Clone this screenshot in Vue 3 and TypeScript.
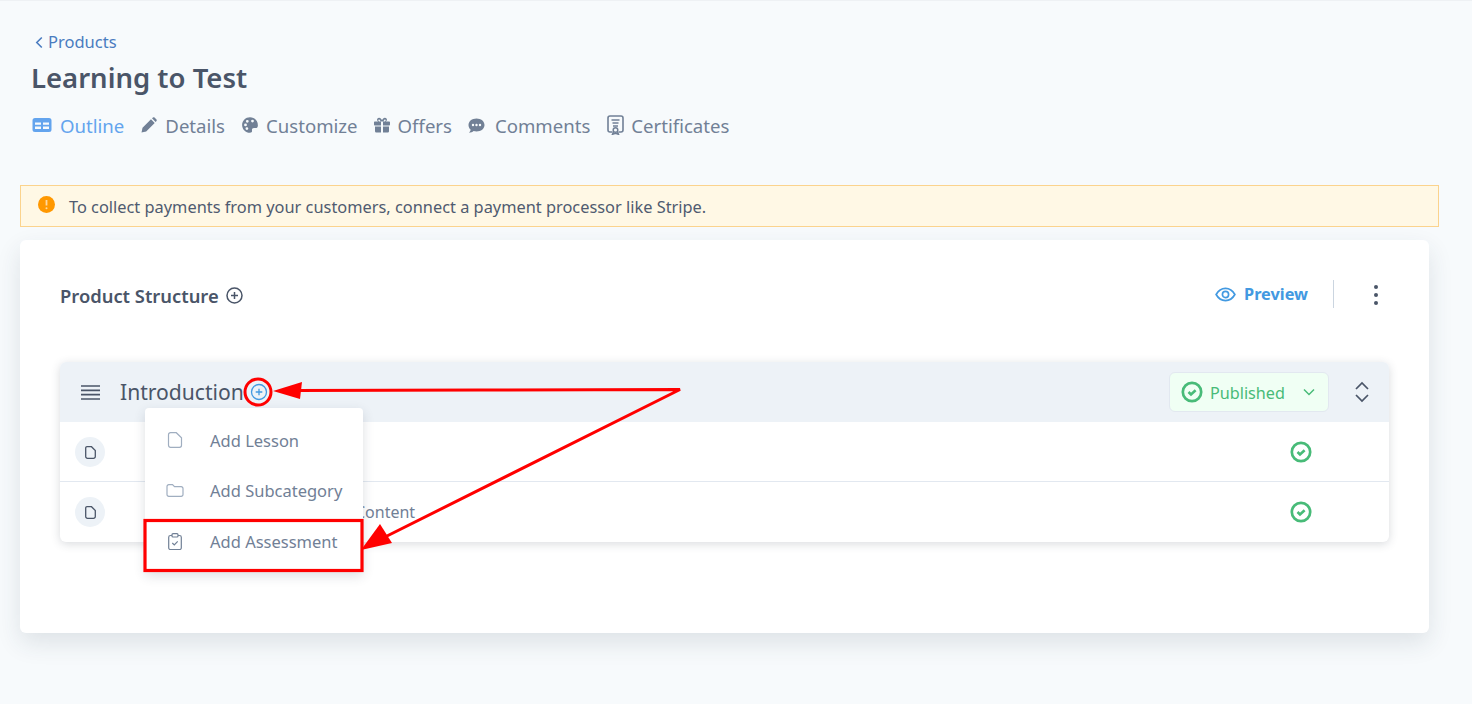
<script setup lang="ts">
const tabs = [
  { label: 'Outline', icon: 'outline', active: true },
  { label: 'Details', icon: 'details' },
  { label: 'Customize', icon: 'palette' },
  { label: 'Offers', icon: 'gift' },
  { label: 'Comments', icon: 'comment' },
  { label: 'Certificates', icon: 'cert' },
]
const rows = ['', 'Content']
</script>

<template>
  <div class="page">
    <header class="head">
      <a class="crumb">
        <svg width="8" height="13" viewBox="0 0 8 13"><path d="M6.800 1.500 1.800 6.500l5 5" fill="none" stroke="currentColor" stroke-width="1.600" /></svg>
        Products
      </a>
      <h1>Learning to Test</h1>
      <nav class="tabs">
        <a v-for="t in tabs" :key="t.label" class="tab" :class="[t.icon, { active: t.active }]">
          <svg v-if="t.icon === 'outline'" class="tab-ic" width="20" height="16" viewBox="0 0 20 16"><path fill="currentColor" fill-rule="evenodd" d="M3 1h14a2.500 2.500 0 0 1 2.500 2.500v9A2.500 2.500 0 0 1 17 15H3a2.500 2.500 0 0 1-2.500-2.500v-9A2.500 2.500 0 0 1 3 1Zm0 4.500v2.300h6V5.500Zm8 0v2.300h6V5.500Zm-8 4V12h6V9.500Zm8 0V12h6V9.500Z" /></svg>
          <svg v-else-if="t.icon === 'details'" class="tab-ic" width="16" height="16" viewBox="0 0 16 16"><path fill="currentColor" d="M.5 15.500l1-4.700 8.500-8.500 3.700 3.700-8.500 8.500ZM11 1.300 12 .5c.5-.4 1-.4 1.500 0l2 2c.4.500.4 1 0 1.500l-.9 1Z" /></svg>
          <svg v-else-if="t.icon === 'palette'" class="tab-ic" width="16" height="16" viewBox="0 0 16 16"><path fill="currentColor" fill-rule="evenodd" d="M8 .2C3.600.2.100 3.600.100 8S3.600 15.800 8 15.800c1.500 0 2.300-1 2-2.200-.3-1.300.4-2.500 1.900-2.500h1.700c1.400 0 2.300-1.100 2.300-2.700C15.900 3.500 12.400.2 8 .2ZM3.500 9.300a1.400 1.400 0 1 1 0-2.800 1.400 1.400 0 0 1 0 2.800Zm1.800-3.600a1.400 1.400 0 1 1 0-2.800 1.400 1.400 0 0 1 0 2.800Zm5.200-.2a1.400 1.400 0 1 1 0-2.800 1.400 1.400 0 0 1 0 2.800ZM4.900 13a1.400 1.400 0 1 1 0-2.800 1.400 1.400 0 0 1 0 2.800Z" /></svg>
          <svg v-else-if="t.icon === 'gift'" class="tab-ic" width="16" height="16" viewBox="0 0 16 16"><path fill="currentColor" d="M1 9.500h6v6H2.300A1.300 1.300 0 0 1 1 14.200Zm8 0h6v4.700a1.300 1.300 0 0 1-1.300 1.300H9ZM1 4.500h3.200C3 3.800 2.800 2.800 3.300 1.800 4 .5 5.800.4 6.800 1.400L8 3l1.200-1.600c1-1 2.800-.9 3.500.4.500 1 .3 2-.9 2.700H15c.6 0 1 .4 1 1v2c0 .5-.4 1-1 1H9v-4H7v4H1c-.6 0-1-.5-1-1v-2c0-.6.400-1 1-1Zm4.700 0h1.100L5.600 2.800c-.5-.6-1.300-.3-1.300.4 0 .8.700 1.300 1.400 1.300Zm3.500 0h1.100c.7 0 1.400-.5 1.400-1.300 0-.7-.8-1-1.300-.4Z" /></svg>
          <svg v-else-if="t.icon === 'comment'" class="tab-ic" width="17" height="15" viewBox="0 0 17 15"><path fill="currentColor" fill-rule="evenodd" d="M8.500.5c4.500 0 8 2.800 8 6.500s-3.500 6.500-8 6.500c-1 0-2-.2-2.900-.4C4.500 14 3 14.800.8 14.800c1-.9 1.700-2 1.900-3.100C1.200 10.500.5 8.900.5 7 .5 3.300 4 .5 8.500.5ZM5 5.800a1.200 1.200 0 1 0 0 2.400 1.200 1.200 0 0 0 0-2.400Zm3.500 0a1.200 1.200 0 1 0 0 2.400 1.200 1.200 0 0 0 0-2.400Zm3.500 0a1.200 1.200 0 1 0 0 2.400 1.200 1.200 0 0 0 0-2.400Z" /></svg>
          <svg v-else class="tab-ic" width="17" height="20" viewBox="0 0 17 20"><g fill="none" stroke="currentColor"><path stroke-width="1.600" d="M5.500 17H3a2 2 0 0 1-2-2V3a2 2 0 0 1 2-2h11a2 2 0 0 1 2 2v12a2 2 0 0 1-2 2h-2.500" /><path stroke-width="1.500" d="M4.500 5h8M5.500 8h6M6 11h5" /><circle cx="8.500" cy="15" r="2.300" stroke-width="1.500" /><path stroke-width="1.500" d="m6.500 17-1 2.300 3-1 3 1-1-2.300" /></g></svg>
          <span>{{ t.label }}</span>
        </a>
      </nav>
    </header>

    <div class="alert">
      <svg width="17" height="17" viewBox="0 0 17 17"><circle cx="8.500" cy="8.500" r="8.500" fill="#ff9800" /><path d="M8.500 4v5.500" stroke="#ffd9a0" stroke-width="1.800" /><circle cx="8.500" cy="12.300" r="1" fill="#ffd9a0" /></svg>
      <span class="alert-text">To collect payments from your customers, connect a payment processor like Stripe.</span>
    </div>

    <section class="card">
      <div class="card-head">
        <div class="struct">
          <span>Product Structure</span>
          <svg width="17" height="17" viewBox="0 0 17 17" fill="none" stroke="#4a5568" stroke-width="1.500"><circle cx="8.500" cy="8.500" r="7.500" /><path d="M8.500 5v7M5 8.500h7" /></svg>
        </div>
        <div class="actions">
          <a class="preview">
            <svg width="21" height="15" viewBox="0 0 22 16" fill="none" stroke="#4299e1" stroke-width="1.800"><path d="M1 8c2.500-4.500 6-6.500 10-6.500S18.500 3.500 21 8c-2.500 4.500-6 6.500-10 6.500S3.500 12.500 1 8Z" /><circle cx="11" cy="8" r="3.300" /></svg>
            <span>Preview</span>
          </a>
          <span class="vline"></span>
          <span class="dots"><i></i><i></i><i></i></span>
        </div>
      </div>

      <div class="section">
        <div class="sec-head">
          <svg class="burger" width="19" height="15" viewBox="0 0 19 15"><path d="M0 1h19M0 5.300h19M0 9.600h19M0 14h19" stroke="#4a5568" stroke-width="1.700" /></svg>
          <span class="sec-title">Introduction</span>
          <svg class="plus" width="18" height="18" viewBox="0 0 18 18" fill="none" stroke="#4299e1" stroke-width="1.300"><circle cx="9" cy="9" r="7.500" /><path d="M9 5.700v6.600M5.700 9h6.600" /></svg>
          <div class="status">
            <div class="pill">
              <svg width="22" height="22" viewBox="0 0 22 22" fill="none" stroke="#48bb78"><circle cx="11" cy="11" r="9.200" stroke-width="2.700" /><path d="m7.500 11 2.500 2.500 4.600-4.200" stroke-width="2.600" /></svg>
              <span class="pill-text">Published</span>
              <svg class="chev" width="12" height="8" viewBox="0 0 12 8" fill="none" stroke="#48bb78" stroke-width="1.500"><path d="m1 1.500 5 5 5-5" /></svg>
            </div>
            <svg class="updown" width="14" height="22" viewBox="0 0 14 22" fill="none" stroke="#4a5568" stroke-width="1.700"><path d="m1 8 6-6 6 6M1 14l6 6 6-6" /></svg>
          </div>
        </div>
        <div v-for="(r, i) in rows" :key="i" class="row">
          <span class="doc">
            <svg width="11" height="13" viewBox="0 0 11 13" fill="none" stroke="#4a5568" stroke-width="1.300"><path d="M2 .7h4.500l3.800 3.800V10.500a1.800 1.800 0 0 1-1.800 1.800H2.500A1.800 1.800 0 0 1 .7 10.500V2A1.300 1.300 0 0 1 2 .7Z" /></svg>
          </span>
          <span v-if="r" class="row-title">{{ r }}</span>
          <svg class="ok" width="22" height="22" viewBox="0 0 22 22" fill="none" stroke="#48bb78"><circle cx="11" cy="11" r="9.200" stroke-width="2.700" /><path d="m7.500 11 2.500 2.500 4.600-4.200" stroke-width="2.600" /></svg>
        </div>

        <div class="menu">
          <a class="item">
            <svg width="15" height="16" viewBox="0 0 15 16" fill="none" stroke="#a0aec0" stroke-width="1.200"><path d="M3 .7h5.800L14 5.800V13.300a2 2 0 0 1-2 2H3a2 2 0 0 1-2-2V2.700a2 2 0 0 1 2-2Z" /></svg>
            <span>Add Lesson</span>
          </a>
          <a class="item">
            <svg width="18" height="13" viewBox="0 0 18 13" fill="none" stroke="#a0aec0" stroke-width="1.200"><path d="M1 2.500a1.800 1.800 0 0 1 1.800-1.800h3.700l2 2h6.700A1.800 1.800 0 0 1 17 4.500v6a1.800 1.800 0 0 1-1.800 1.800H2.800A1.800 1.800 0 0 1 1 10.500Z" /></svg>
            <span>Add Subcategory</span>
          </a>
          <a class="item">
            <svg width="15" height="17" viewBox="0 0 15 17" fill="none" stroke="#718096" stroke-width="1.200"><path d="M4.500 2.500H3A1.800 1.800 0 0 0 1.200 4.300v10.500A1.800 1.800 0 0 0 3 16.600h9a1.800 1.800 0 0 0 1.800-1.800V4.300A1.800 1.800 0 0 0 12 2.500h-1.500" /><rect x="4.500" y=".7" width="6" height="3.300" rx="1" /><path d="m4.800 10 2 2 3.400-3.600" /></svg>
            <span>Add Assessment</span>
          </a>
        </div>
      </div>
    </section>

    <svg class="notes" width="1472" height="704" viewBox="0 0 1472 704" fill="none">
      <circle cx="258" cy="392" r="13" stroke="#f00" stroke-width="3" />
      <rect x="145" y="520.500" width="217" height="50" stroke="#f00" stroke-width="3.200" />
      <path d="M296 390.500 480 390 680 389.500 385 537" stroke="#f00" stroke-width="3" />
      <path d="M273 391 302 382 300 399Z" fill="#f00" />
      <path d="M361 550 380 524 392 543Z" fill="#f00" />
    </svg>
  </div>
</template>

<style>
html, body { margin: 0; background: #f7fafc; }
</style>

<style scoped>
.page {
  position: relative;
  box-sizing: border-box;
  height: 704px;
  overflow: hidden;
  padding: 1px 33px 0 20px;
  background: #f7fafc;
  border-top: 1px solid #eef1f4;
  font-family: "Noto Sans", "Open Sans", sans-serif;
  color: #718096;
}
.head { padding: 30px 0 0 11px; height: 183px; box-sizing: border-box; }
.crumb {
  display: flex; align-items: center; gap: 5px;
  margin-left: 4px; height: 20px;
  font-size: 16.500px; line-height: 20px; color: #4a7cc0;
}
h1 {
  margin: 6px 0 0;
  font-size: 27.500px; line-height: 40px; font-weight: 600; color: #4a5568;
}
.tabs { display: flex; gap: 17px; margin-top: 14px; margin-left: 1px; align-items: center; height: 28px; }
.tab { display: flex; align-items: center; gap: 8px; font-size: 18.600px; line-height: 28px; color: #718096; }
.tab-ic { margin-top: -2px; }
.tab.gift { margin-left: -1px; }
.tab.comment { gap: 10px; margin-left: -1px; }
.tab.cert { gap: 7px; }
.tab.active { color: #63a4ee; }
.alert {
  display: flex; align-items: center; gap: 14px;
  width: 1419px; height: 42px; box-sizing: border-box;
  padding: 0 17px;
  background: #fff8e5; border: 1px solid #fbd38d;
  font-size: 16.360px; color: #4f5b70;
}
.alert svg { margin-top: -4px; }
.alert-text { margin-top: 2px; }
.card {
  width: 1409px; height: 393px; box-sizing: border-box;
  margin-top: 13px; padding: 0 40px;
  background: #fff; border-radius: 6px;
  box-shadow: 0 10px 24px rgba(45, 55, 72, 0.12);
}
.card-head { display: flex; align-items: center; justify-content: space-between; height: 122px; }
.struct { display: flex; align-items: center; gap: 7px; font-size: 18.350px; font-weight: 600; color: #4a5568; margin-bottom: 12px; }
.actions { display: flex; align-items: center; margin-bottom: 14px; }
.preview { display: flex; align-items: center; gap: 8px; font-size: 16.300px; font-weight: 700; color: #4299e1; }
.vline { width: 1px; height: 28px; background: #cbd5e0; margin: 0 40px 0 25px; }
.dots { display: flex; flex-direction: column; gap: 4px; margin-right: 11px; margin-top: 2px; }
.dots i { width: 4px; height: 4px; border-radius: 50%; background: #4a5568; }
.section {
  position: relative;
  width: 1329px;
  border-radius: 6px; background: #fff;
  box-shadow: 0 2px 10px rgba(45, 55, 72, 0.18);
}
.sec-head {
  display: flex; align-items: center; height: 60px;
  padding: 0 20px 0 21px; background: #edf2f7; border-radius: 6px 6px 0 0;
  box-sizing: border-box;
}
.burger { flex: none; }
.sec-title { margin-left: 20px; margin-bottom: 2px; font-size: 21.100px; color: #4a5568; }
.plus { margin-left: 6px; }
.status { display: flex; align-items: center; margin-left: auto; }
.pill {
  display: flex; align-items: center;
  width: 160px; height: 40px; box-sizing: border-box;
  padding-left: 11px; gap: 7px;
  background: #f0fff4; border: 1px solid #e2e8f0; border-radius: 6px;
  font-size: 16.200px; color: #48bb78;
}
.pill-text { margin-top: 2px; }
.chev { margin-left: 11px; }
.updown { margin-left: 26px; }
.row {
  display: flex; align-items: center; height: 60px;
  padding: 0 0 0 15px; box-sizing: border-box;
}
.row + .row { height: 61px; margin-top: -1px; border-top: 1px solid #e2e8f0; }
.doc {
  display: flex; align-items: center; justify-content: center;
  width: 30px; height: 30px; border-radius: 50%; background: #edf2f7;
}
.row-title { margin-left: 250px; font-size: 16px; color: #718096; }
.ok { margin-left: auto; margin-right: 77px; }
.menu {
  position: absolute; left: 85px; top: 46px;
  width: 218px; height: 164px; background: #fff;
  border-radius: 4px; padding-top: 7px; box-sizing: border-box;
  box-shadow: 0 4px 12px rgba(45, 55, 72, 0.16);
}
.item {
  display: flex; align-items: center; height: 50.500px;
  padding-left: 21px; font-size: 16.500px; color: #718096;
}
.item svg { width: 18px; flex: none; }
.item span { margin-left: 26px; }
.notes { position: absolute; left: 0; top: -1px; pointer-events: none; }
</style>
